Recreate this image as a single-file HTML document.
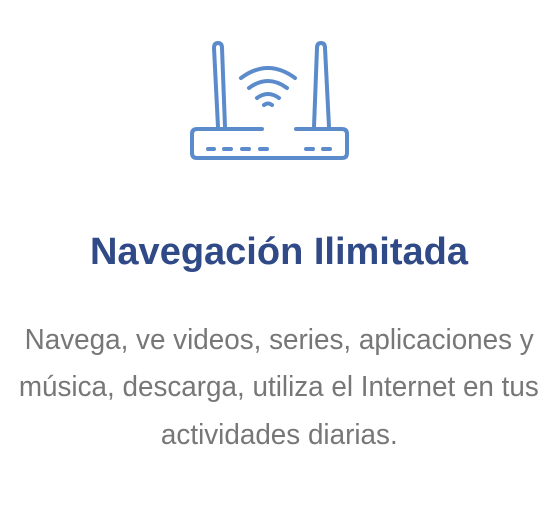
<!DOCTYPE html>
<html><head><meta charset="utf-8"><style>
html,body{margin:0;padding:0;background:#fff;width:558px;height:516px;overflow:hidden;}
.l{position:absolute;left:0;width:558px;text-align:center;white-space:nowrap;font-family:"Liberation Sans",sans-serif;}
.l span{display:inline-block;}
.t{top:228px;font-size:38px;font-weight:bold;color:#2f4a86;line-height:48px;}
.t span{transform:scaleX(1.0);}
.b{font-size:29px;color:#777;line-height:40px;}
.b span{transform:scaleX(0.96);}
</style></head><body>
<svg width="558" height="200" style="position:absolute;left:0;top:0" fill="none" stroke="#5b8bcb" stroke-width="4" stroke-linecap="round" stroke-linejoin="round">
<path d="M218 127 L214 48 Q214 43 218 43 Q222 43 222 48 L225 127"/>
<path d="M314 127 L317 48 Q317 43 321 43 Q325 43 325 48 L329 127"/>
<path d="M262 129 H197 Q192 129 192 134 V153 Q192 158 197 158 H342 Q347 158 347 153 V134 Q347 129 342 129 H296"/>
<path d="M241 78 Q268 58 295 78"/>
<path d="M249 88 Q268 74 287 88"/>
<path d="M257 98 Q268 90 279 98"/>
<path d="M264 105 Q268 102 272 105"/>
<path d="M208 149 H214 M224 149 H231 M242 149 H249 M260 149 H267 M306 149 H313 M323 149 H330"/>
</svg>
<div class="l t"><span>Navegación Ilimitada</span></div>
<div class="l b" style="top:320px"><span>Navega, ve videos, series, aplicaciones y</span></div>
<div class="l b" style="top:367px"><span>música, descarga, utiliza el Internet en tus</span></div>
<div class="l b" style="top:415px"><span>actividades diarias.</span></div>
</body></html>
